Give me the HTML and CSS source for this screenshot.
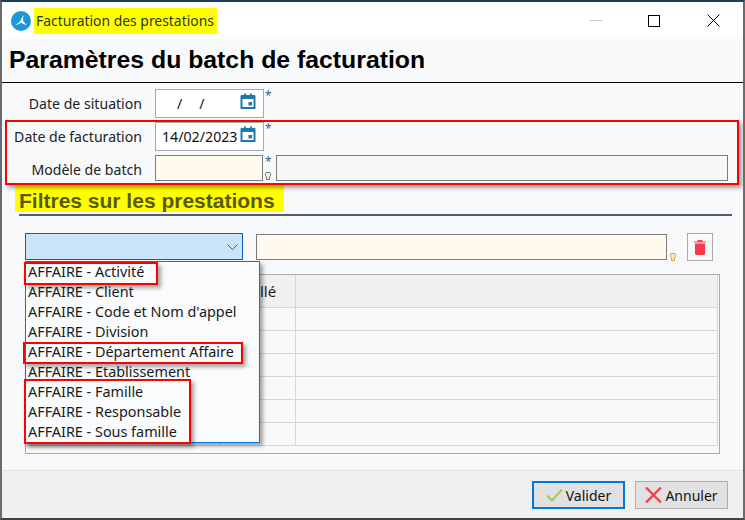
FILE: index.html
```html
<!DOCTYPE html>
<html lang="fr">
<head>
<meta charset="utf-8">
<title>Facturation des prestations</title>
<link rel="stylesheet" href="styles.css">
</head>
<body>
<div class="window">
  <div class="titlebar">
    <svg class="logo" width="20" height="20" viewBox="0 0 20 20"><circle cx="10" cy="10" r="10" fill="#1b98d5"/><path d="M4 13.500C7 13 9.500 11 11 6.500L12.500 4L12 8.500C12 10.500 13.500 12 16 14C13 13.500 11 12.500 10 11.500C8.500 13 6.500 14 4 13.500Z" fill="#fff"/></svg>
    <span class="title-text">Facturation des prestations</span>
    <div class="win-controls">
      <span class="win-min"></span>
      <span class="win-max"></span>
      <svg class="win-close" width="13" height="13" viewBox="0 0 13 13"><path d="M.5.5L12.500 12.500M12.500.5L.5 12.500" stroke="#000" stroke-width="1" fill="none"/></svg>
    </div>
  </div>
  <h1 class="heading">Paramètres du batch de facturation</h1>
  <div class="form">
    <div class="row row-1">
      <label class="lbl">Date de situation</label>
      <div class="date-field"><span class="date-val date-empty">/</span><span class="date-val date-slash">/</span>
        <svg class="cal" width="16" height="16" viewBox="0 0 16 16"><path d="M1.500 3.500h13V15h-13z" fill="none" stroke="#1f7ba6" stroke-width="2"/><path d="M1 2h14v4H1zM4 .5h2V3H4zM10 .5h2V3h-2z" fill="#1f7ba6"/><rect x="8.500" y="9" width="3.500" height="3.500" fill="#1f7ba6"/></svg>
      </div>
      <span class="req">*</span>
    </div>
    <div class="row row-2">
      <label class="lbl">Date de facturation</label>
      <div class="date-field"><span class="date-val">14/02/2023</span>
        <svg class="cal" width="16" height="16" viewBox="0 0 16 16"><path d="M1.500 3.500h13V15h-13z" fill="none" stroke="#1f7ba6" stroke-width="2"/><path d="M1 2h14v4H1zM4 .5h2V3H4zM10 .5h2V3h-2z" fill="#1f7ba6"/><rect x="8.500" y="9" width="3.500" height="3.500" fill="#1f7ba6"/></svg>
      </div>
      <span class="req">*</span>
    </div>
    <div class="row row-3">
      <label class="lbl">Modèle de batch</label>
      <div class="input-cream small-input"></div>
      <div class="marks">
        <span class="req">*</span>
        <svg width="6" height="8" viewBox="0 0 6 8"><path d="M1 .5h4l.5 1v2L4.500 5v2.500h-3V5L.5 3.500v-2z" fill="#eee" stroke="#777" stroke-width="1"/></svg>
      </div>
      <div class="input-grey"></div>
    </div>
  </div>
  <div class="section"><h2 class="section-title">Filtres sur les prestations</h2></div>
  <div class="filters">
    <div class="select">
      <svg width="11" height="6" viewBox="0 0 11 6"><path d="M.5.5l5 5 5-5" fill="none" stroke="#555" stroke-width="1"/></svg>
    </div>
    <div class="input-cream wide-input"></div>
    <svg class="bulb" width="6" height="8" viewBox="0 0 6 8"><path d="M1 .5h4l.5 1v2L4.500 5v2.500h-3V5L.5 3.500v-2z" fill="#fde9b8" stroke="#e79a35" stroke-width="1"/></svg>
    <button class="trash" type="button" aria-label="Supprimer">
      <svg width="12" height="15" viewBox="0 0 12 15"><path d="M0 1.500h12v1H0zM3.500 0h5v1.500h-5z" fill="#f9415a"/><path d="M1 3.500h10V14l-1 1H2l-1-1z" fill="#f93a4a"/></svg>
    </button>
  </div>
  <div class="table-wrap">
    <table class="grid">
      <colgroup><col class="c1"><col class="c2"><col class="c3"><col></colgroup>
      <thead><tr><th></th><th></th><th class="th-lib">Libellé</th><th></th></tr></thead>
      <tbody>
        <tr><td></td><td></td><td></td><td></td></tr>
        <tr><td></td><td></td><td></td><td></td></tr>
        <tr><td></td><td></td><td></td><td></td></tr>
        <tr><td></td><td></td><td></td><td></td></tr>
        <tr><td></td><td></td><td></td><td></td></tr>
        <tr><td></td><td></td><td></td><td></td></tr>
      </tbody>
    </table>
  </div>
  <div class="footer">
    <button class="btn btn-primary" type="button">
      <svg width="17" height="14" viewBox="0 0 17 14"><path d="M1 7.500l5 5L16 1.500" fill="none" stroke="#9ccb5f" stroke-width="2"/></svg>Valider
    </button>
    <button class="btn" type="button">
      <svg width="17" height="16" viewBox="0 0 17 16"><path d="M1 .5l15 15M16 .5l-15 15" fill="none" stroke="#f5404f" stroke-width="2.400"/></svg>Annuler
    </button>
  </div>

  <ul class="dropdown">
    <li>AFFAIRE - Activité</li>
    <li>AFFAIRE - Client</li>
    <li>AFFAIRE - Code et Nom d'appel</li>
    <li>AFFAIRE - Division</li>
    <li>AFFAIRE - Département Affaire</li>
    <li>AFFAIRE - Etablissement</li>
    <li>AFFAIRE - Famille</li>
    <li>AFFAIRE - Responsable</li>
    <li>AFFAIRE - Sous famille</li>
  </ul>

  <div class="mark mark-a"></div>
  <div class="mark mark-b"></div>
  <div class="mark mark-c"></div>
  <div class="mark mark-d"></div>
</div>
</body>
</html>
```
FILE: styles.css
```css
* { box-sizing: border-box; }
html, body { margin: 0; padding: 0; background: #fff; }
body { font-family: "Noto Sans", "Open Sans", sans-serif; font-size: 14px; color: #1a1a1a; }

.window {
  position: relative;
  width: 745px;
  height: 520px;
  overflow: hidden;
  display: flex;
  flex-direction: column;
  background: #f8f9fb;
  border-top: 2px solid #173f52;
  border-left: 2px solid #6b6b6b;
  border-right: 2px solid #6b6b6b;
  border-bottom: 2px solid #444;
}

.titlebar {
  height: 37px;
  flex: none;
  background: #fff;
  display: flex;
  align-items: center;
  padding-left: 9px;
  position: relative;
}
.logo { flex: none; }
.title-text {
  margin-left: 3px;
  height: 26px;
  width: 183px;
  padding-left: 2px;
  line-height: 26px;
  background: #ffff00;
  color: #2b3a1a;
  font-size: 13.9px;
  white-space: nowrap;
}
.win-controls { margin-left: auto; display: flex; align-items: center; padding-right: 23px; }
.win-min { width: 12px; height: 1px; background: #c8c8c8; margin-right: 46px; }
.win-max { width: 12px; height: 12px; border: 1px solid #000; margin-right: 47px; }
.win-close { display: block; }

.heading {
  margin: 0;
  height: 44px;
  flex: none;
  padding: 2px 0 0 7px;
  border-bottom: 1px solid #000;
  font: bold 24.8px/38px "Liberation Sans", Arial, sans-serif;
  color: #000;
}

.form { height: 102px; flex: none; padding-top: 6px; position: relative; }
.row { display: flex; align-items: flex-start; }
.row-1 { height: 33px; }
.row-2 { height: 33px; }
.lbl { width: 140px; flex: none; text-align: right; color: #222; line-height: 29px; font-size: 14.1px; }
.date-field {
  margin-left: 13px;
  width: 109px;
  height: 29px;
  flex: none;
  background: #fff;
  border: 1px solid #a8a8a8;
  display: flex;
  align-items: flex-start;
  position: relative;
}
.date-val { line-height: 28px; padding-left: 6px; white-space: nowrap; color: #111; font-size: 14.2px; }
.date-empty { padding-left: 21px; }
.date-slash { padding-left: 17px; }
.cal { position: absolute; right: 7px; top: 3px; }
.req { color: #3d5f86; line-height: 14px; margin-left: 1px; font-size: 12px; }

.input-cream { background: #fff9ee; border: 1px solid #7b7b7b; }
.small-input { margin-left: 13px; width: 108px; height: 26px; flex: none; }
.marks { width: 13px; flex: none; height: 26px; display: flex; flex-direction: column; align-items: flex-start; padding-left: 2px; }
.marks .req { margin-left: 0; height: 17px; }
.input-grey { width: 452px; height: 26px; background: #f7f7f7; border: 1px solid #7b7b7b; }

.section {
  flex: none;
  height: 31px;
  margin: 0 11px 0 17px;
  border-bottom: 2px solid #555b60;
  position: relative;
}
.section-title {
  margin: 0 0 0 -4px;
  width: 269px;
  height: 27px;
  padding-left: 4px;
  background: #ffff00;
  color: #5a5a00;
  font: bold 21px/31px "Liberation Sans", Arial, sans-serif;
  white-space: nowrap;
}

.filters {
  flex: none;
  display: flex;
  align-items: flex-start;
  margin: 17px 0 0 23px;
  height: 41px;
}
.select {
  width: 218px;
  height: 27px;
  background: #cce4f7;
  border: 1px solid #0b62ab;
  display: flex;
  align-items: center;
  justify-content: flex-end;
  padding-right: 4px;
}
.wide-input { margin: 1px 0 0 13px; width: 411px; height: 26px; }
.bulb { margin: 20px 0 0 3px; flex: none; }
.trash {
  margin: 0 0 0 11px;
  width: 26px;
  height: 28px;
  padding: 0;
  background: #f8f9fb;
  border: 1px solid #aaa;
  display: flex;
  align-items: center;
  justify-content: center;
}

.table-wrap {
  flex: none;
  margin-left: 23px;
  width: 695px;
  height: 180px;
  border: 1px solid #aaa;
  overflow: hidden;
  padding-right: 1px;
}
.grid { border-collapse: collapse; table-layout: fixed; width: 692px; }
.c1 { width: 126px; }
.c2 { width: 68px; }
.c3 { width: 75px; }
.grid th {
  height: 32px;
  background: #f0f0f0;
  border-right: 1px solid #d6d6d6;
  border-bottom: 1px solid #d6d6d6;
  font-weight: 400;
  font-size: 15px;
  text-align: left;
}
.th-lib { padding-left: 10px; }
.grid td {
  height: 23px;
  border-right: 1px solid #d6d6d6;
  border-bottom: 1px solid #d6d6d6;
}

.footer {
  flex: 1;
  margin-top: 16px;
  background: #f0f0f0;
  border-top: 1px solid #e3e3e3;
  display: flex;
  justify-content: flex-end;
  align-items: flex-start;
  gap: 10px;
  padding: 10px 15px 0 0;
}
.btn {
  width: 93px;
  height: 28px;
  background: #e1e1e1;
  border: 1px solid #adadad;
  font: 14px "Noto Sans", sans-serif;
  color: #111;
  display: flex;
  align-items: center;
  justify-content: center;
  gap: 3px;
  padding: 0;
}
.btn-primary { border: 2px solid #0078d7; }

.dropdown {
  position: absolute;
  left: 23px;
  top: 259px;
  width: 235px;
  height: 182px;
  margin: 0;
  padding: 0 0 0 2px;
  list-style: none;
  background: #f9fbfd;
  border: 1px solid #0078d7;
  box-shadow: 3px 3px 4px rgba(0,0,0,.35);
  color: #1a1a1a;
  font-size: 14.4px;
}
.dropdown li { height: 20px; line-height: 20px; white-space: nowrap; }

.mark {
  position: absolute;
  border: 2px solid #f00;
  box-shadow: 3px 3px 4px rgba(0,0,0,.35);
}
.mark-a { left: 3px; top: 118px; width: 734px; height: 65px; }
.mark-b { left: 22px; top: 260px; width: 134px; height: 23px; }
.mark-c { left: 21px; top: 340px; width: 220px; height: 22px; }
.mark-d { left: 22px; top: 377px; width: 167px; height: 65px; }
```
